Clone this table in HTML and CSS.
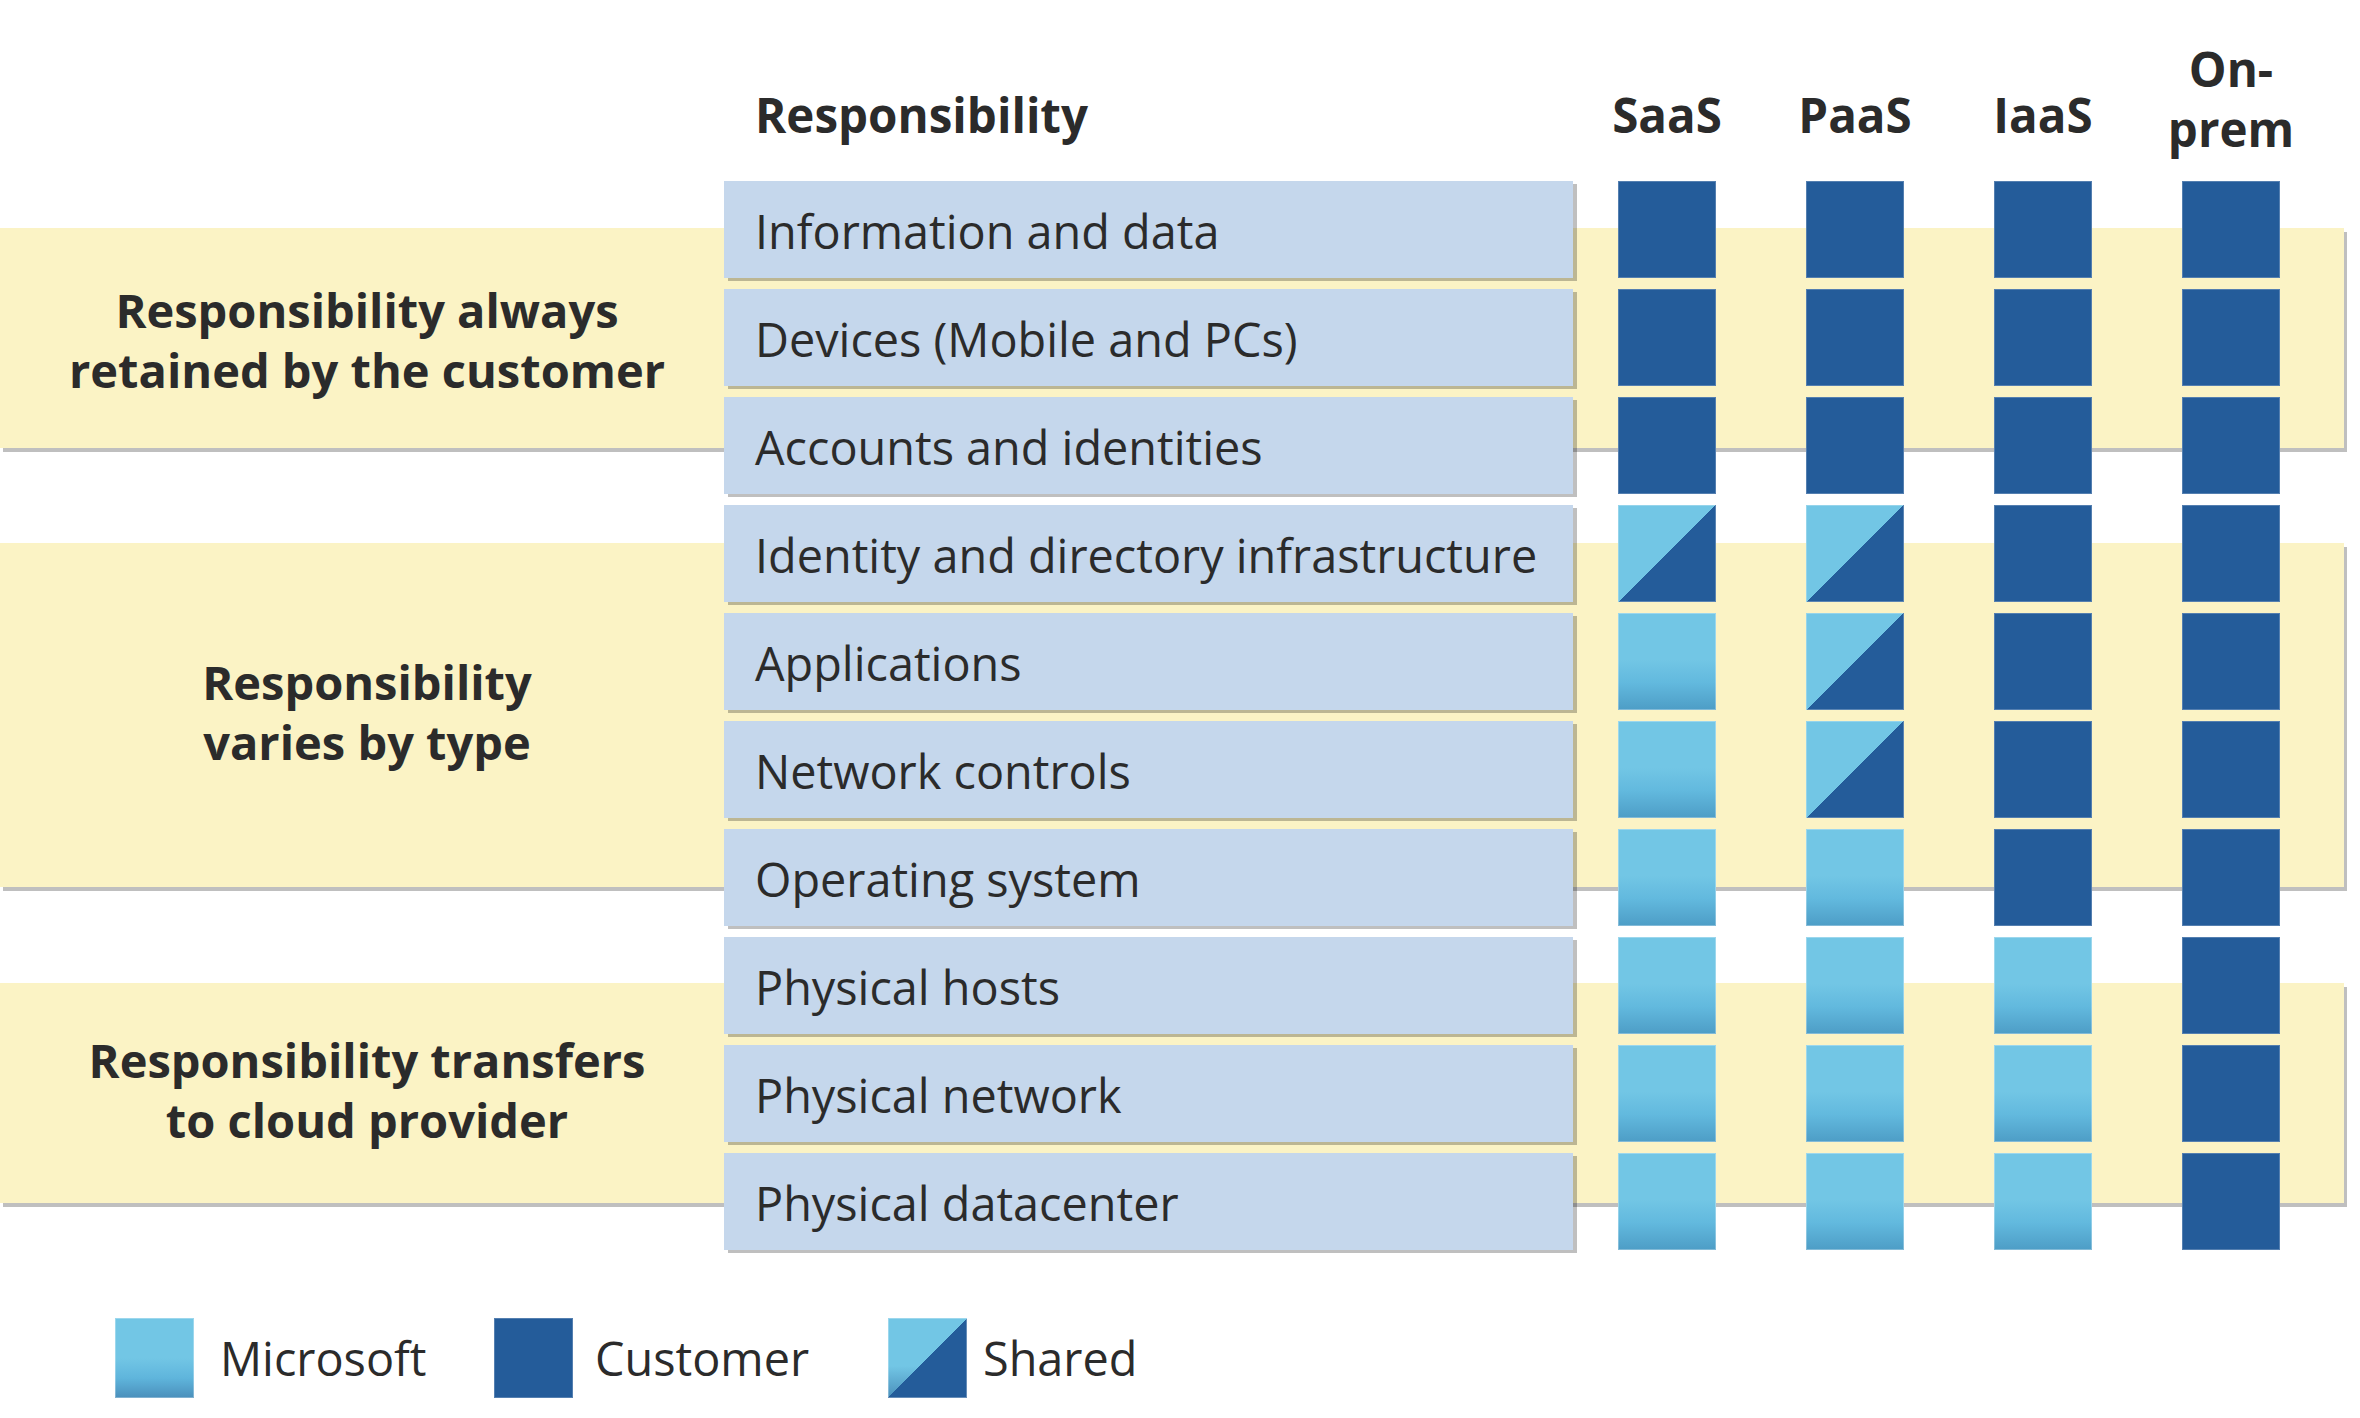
FILE: index.html
```html
<!DOCTYPE html>
<html lang="en">
<head>
  <meta charset="UTF-8" />
  <title>Shared responsibility model</title>
  <link rel="stylesheet" href="styles.css">
</head>
<body>
  <div class="chart">
    <!-- background bands, painted first so rows sit on top -->
    <div class="band band-always"><div class="band-label">Responsibility always<br>retained by the customer</div></div>
    <div class="band band-varies"><div class="band-label">Responsibility<br>varies by type</div></div>
    <div class="band band-transfers"><div class="band-label">Responsibility transfers<br>to cloud provider</div></div>

    <div class="head head-resp">Responsibility</div>
    <div class="head col-1">SaaS</div>
    <div class="head col-2">PaaS</div>
    <div class="head col-3">IaaS</div>
    <div class="head head-two col-4">On-<br>prem</div>

    <div class="resp r1">Information and data</div>
    <div class="cell customer r1 col-1"></div>
    <div class="cell customer r1 col-2"></div>
    <div class="cell customer r1 col-3"></div>
    <div class="cell customer r1 col-4"></div>

    <div class="resp r2">Devices (Mobile and PCs)</div>
    <div class="cell customer r2 col-1"></div>
    <div class="cell customer r2 col-2"></div>
    <div class="cell customer r2 col-3"></div>
    <div class="cell customer r2 col-4"></div>

    <div class="resp r3">Accounts and identities</div>
    <div class="cell customer r3 col-1"></div>
    <div class="cell customer r3 col-2"></div>
    <div class="cell customer r3 col-3"></div>
    <div class="cell customer r3 col-4"></div>

    <div class="resp r4">Identity and directory infrastructure</div>
    <div class="cell shared r4 col-1"></div>
    <div class="cell shared r4 col-2"></div>
    <div class="cell customer r4 col-3"></div>
    <div class="cell customer r4 col-4"></div>

    <div class="resp r5">Applications</div>
    <div class="cell microsoft r5 col-1"></div>
    <div class="cell shared r5 col-2"></div>
    <div class="cell customer r5 col-3"></div>
    <div class="cell customer r5 col-4"></div>

    <div class="resp r6">Network controls</div>
    <div class="cell microsoft r6 col-1"></div>
    <div class="cell shared r6 col-2"></div>
    <div class="cell customer r6 col-3"></div>
    <div class="cell customer r6 col-4"></div>

    <div class="resp r7">Operating system</div>
    <div class="cell microsoft r7 col-1"></div>
    <div class="cell microsoft r7 col-2"></div>
    <div class="cell customer r7 col-3"></div>
    <div class="cell customer r7 col-4"></div>

    <div class="resp r8">Physical hosts</div>
    <div class="cell microsoft r8 col-1"></div>
    <div class="cell microsoft r8 col-2"></div>
    <div class="cell microsoft r8 col-3"></div>
    <div class="cell customer r8 col-4"></div>

    <div class="resp r9">Physical network</div>
    <div class="cell microsoft r9 col-1"></div>
    <div class="cell microsoft r9 col-2"></div>
    <div class="cell microsoft r9 col-3"></div>
    <div class="cell customer r9 col-4"></div>

    <div class="resp r10">Physical datacenter</div>
    <div class="cell microsoft r10 col-1"></div>
    <div class="cell microsoft r10 col-2"></div>
    <div class="cell microsoft r10 col-3"></div>
    <div class="cell customer r10 col-4"></div>
  </div>

  <div class="legend">
    <div class="legend-item item-ms"><span class="swatch microsoft-swatch"></span>Microsoft</div>
    <div class="legend-item item-cu"><span class="swatch customer"></span>Customer</div>
    <div class="legend-item item-sh"><span class="swatch shared-swatch"></span>Shared</div>
  </div>
</body>
</html>
```

FILE: styles.css
```css
body {
  margin: 0;
  background: #fff;
  color: #2b2b2b;
  font-family: "Open Sans", "Noto Sans", sans-serif;
}

.chart {
  display: grid;
  grid-template-columns: 724px 849px repeat(4, 188px) 19px;
  grid-template-rows: 170px repeat(10, 97px);
  row-gap: 11px;
}

/* yellow bands behind the rows */
.band {
  grid-column: 1 / -1;
  background: #fbf3c5;
  box-shadow: 3px 4px 0 rgba(0, 0, 0, 0.25);
  display: flex;
  align-items: center;
}

.band-always {
  grid-row: 2 / 5;
  margin: 47px 0 46px;
}

.band-varies {
  grid-row: 5 / 9;
  margin: 38px 0 39px;
}

.band-transfers {
  grid-row: 9 / 12;
  margin: 46px 0 47px;
}

.band-label {
  width: 734px;
  padding-top: 3px;
  text-align: center;
  font-weight: 700;
  font-size: 47px;
  line-height: 60px;
}

.band-varies .band-label,
.band-transfers .band-label {
  padding: 0 0 7px;
}

.head {
  grid-row: 1;
  align-self: end;
  font-weight: 700;
  font-size: 47.5px;
  line-height: 60px;
  padding-bottom: 25px;
  text-align: center;
}

.head-resp {
  grid-column: 2;
  text-align: left;
  padding-left: 31px;
}

.head-two {
  padding-bottom: 11px;
}

.col-1 { grid-column: 3; }
.col-2 { grid-column: 4; }
.col-3 { grid-column: 5; }
.col-4 { grid-column: 6; }

.r1 { grid-row: 2; }
.r2 { grid-row: 3; }
.r3 { grid-row: 4; }
.r4 { grid-row: 5; }
.r5 { grid-row: 6; }
.r6 { grid-row: 7; }
.r7 { grid-row: 8; }
.r8 { grid-row: 9; }
.r9 { grid-row: 10; }
.r10 { grid-row: 11; }

.resp {
  grid-column: 2;
  background: #c5d7ec;
  box-shadow: 4px 3px 0 rgba(0, 0, 0, 0.25);
  display: flex;
  align-items: center;
  padding: 3px 0 0 31px;
  font-size: 46.8px;
  white-space: nowrap;
}

.cell {
  width: 98px;
  justify-self: center;
}

.customer {
  background: #245c9a;
  box-shadow: inset 0 0 0 1px rgba(255, 255, 255, 0.22);
}

.microsoft {
  background: linear-gradient(to bottom, #72c6e5 0%, #72c6e5 48%, #62b9de 72%, #4d9dc6 100%);
  box-shadow: inset 0 0 0 1px rgba(255, 255, 255, 0.3);
}

.shared {
  background: linear-gradient(to top left, #245c9a 50%, #72c6e5 50%);
  box-shadow: inset 0 0 0 1px rgba(255, 255, 255, 0.25);
}

.legend {
  display: flex;
  margin-top: 68px;
  padding-left: 115px;
  font-size: 46.8px;
}

.legend-item {
  display: flex;
  align-items: center;
  gap: 26px;
}

.item-ms { width: 379px; }
.item-cu { width: 394px; gap: 22px; }
.item-sh { gap: 16px; }

.swatch {
  display: inline-block;
  width: 79px;
  height: 80px;
}

.microsoft-swatch {
  background: linear-gradient(to bottom, #72c6e5 0%, #72c6e5 50%, #5fb5dc 75%, #4a8fbb 100%);
  box-shadow: inset 0 0 0 1px rgba(255, 255, 255, 0.3);
}

.shared-swatch {
  background:
    linear-gradient(to top left, #245c9a 50%, transparent 50%),
    linear-gradient(to bottom, #72c6e5 0%, #72c6e5 60%, #4a8fbb 100%);
  box-shadow: inset 0 0 0 1px rgba(255, 255, 255, 0.3);
}
```
